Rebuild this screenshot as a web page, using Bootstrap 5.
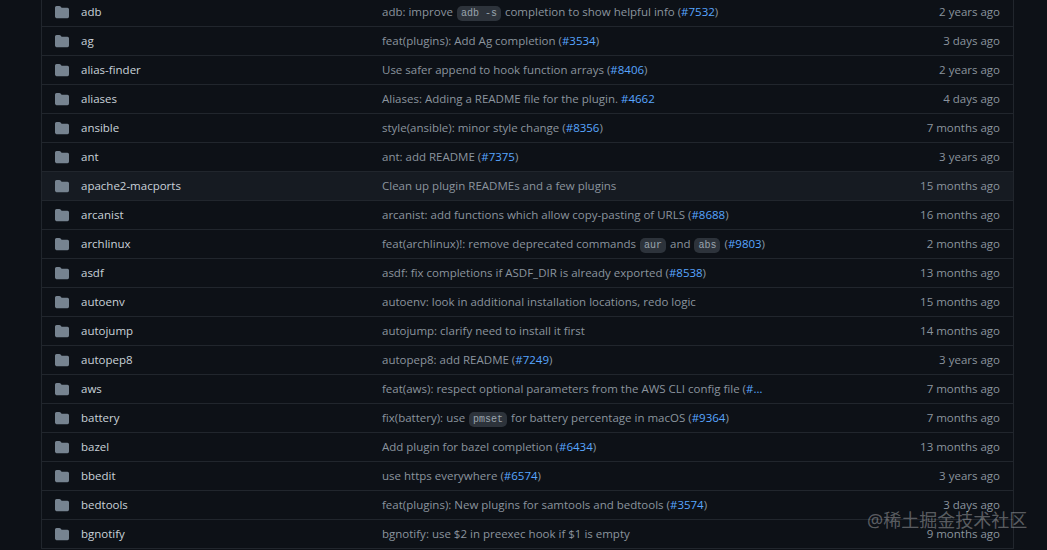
<!DOCTYPE html>
<html lang="en">
<head>
<meta charset="utf-8">
<title>plugins</title>
<link rel="stylesheet" href="https://cdn.jsdelivr.net/npm/bootstrap@5.3.0/dist/css/bootstrap.min.css">
<style>
html,body{height:550px;overflow:hidden;background:#0d1117;}
body{font-family:"Open Sans","Noto Sans",sans-serif;font-size:11.5px;color:#c9d1d9;}
.file-box{margin:-3px 33px 0 41px;border:1px solid #21262d;border-radius:0;}
.file-row{height:29px;border-top:1px solid #21262d;padding:0 13px;}
.file-row:first-child{border-top:0;height:28px;}
.file-row.hovered{background:#161b22;}
.ico{width:14px;height:14px;fill:#768390;margin-right:12px;flex:none;}
.fname{width:301px;flex:none;color:#c9d1d9;}
.msg{flex:1 1 0;min-width:0;color:#8b949e;white-space:nowrap;}
.msg a{color:#58a6ff;text-decoration:none;}
.tag{font-family:"Liberation Mono",monospace;font-size:10px;background:#2d333b;color:#9aa4ae;border-radius:5px;padding:2px 4px;margin:0 1px;}
.age{width:110px;flex:none;text-align:right;color:#8b949e;}
.mark-water{position:absolute;left:867px;top:509px;font-family:"Noto Sans","Noto Sans CJK SC",sans-serif;font-size:18px;line-height:22px;color:rgba(255,255,255,.32);white-space:nowrap;letter-spacing:0;}
</style>
</head>
<body>
<div class="file-box">
<div class="file-row d-flex align-items-center"><svg class="ico" viewBox="0 0 16 16"><path d="M1.75 1A1.75 1.75 0 0 0 0 2.75v10.5C0 14.216.784 15 1.75 15h12.5A1.75 1.75 0 0 0 16 13.25v-8.5A1.75 1.75 0 0 0 14.25 3H7.5a.25.25 0 0 1-.2-.1l-.9-1.2C6.07 1.26 5.55 1 5 1H1.75z"/></svg><span class="fname">adb</span><span class="msg">adb: improve <code class="tag">adb -s</code> completion to show helpful info (<a href="#">#7532</a>)</span><span class="age">2 years ago</span></div>
<div class="file-row d-flex align-items-center"><svg class="ico" viewBox="0 0 16 16"><path d="M1.75 1A1.75 1.75 0 0 0 0 2.75v10.5C0 14.216.784 15 1.75 15h12.5A1.75 1.75 0 0 0 16 13.25v-8.5A1.75 1.75 0 0 0 14.25 3H7.5a.25.25 0 0 1-.2-.1l-.9-1.2C6.07 1.26 5.55 1 5 1H1.75z"/></svg><span class="fname">ag</span><span class="msg">feat(plugins): Add Ag completion (<a href="#">#3534</a>)</span><span class="age">3 days ago</span></div>
<div class="file-row d-flex align-items-center"><svg class="ico" viewBox="0 0 16 16"><path d="M1.75 1A1.75 1.75 0 0 0 0 2.75v10.5C0 14.216.784 15 1.75 15h12.5A1.75 1.75 0 0 0 16 13.25v-8.5A1.75 1.75 0 0 0 14.25 3H7.5a.25.25 0 0 1-.2-.1l-.9-1.2C6.07 1.26 5.55 1 5 1H1.75z"/></svg><span class="fname">alias-finder</span><span class="msg">Use safer append to hook function arrays (<a href="#">#8406</a>)</span><span class="age">2 years ago</span></div>
<div class="file-row d-flex align-items-center"><svg class="ico" viewBox="0 0 16 16"><path d="M1.75 1A1.75 1.75 0 0 0 0 2.75v10.5C0 14.216.784 15 1.75 15h12.5A1.75 1.75 0 0 0 16 13.25v-8.5A1.75 1.75 0 0 0 14.25 3H7.5a.25.25 0 0 1-.2-.1l-.9-1.2C6.07 1.26 5.55 1 5 1H1.75z"/></svg><span class="fname">aliases</span><span class="msg">Aliases: Adding a README file for the plugin. <a href="#">#4662</a></span><span class="age">4 days ago</span></div>
<div class="file-row d-flex align-items-center"><svg class="ico" viewBox="0 0 16 16"><path d="M1.75 1A1.75 1.75 0 0 0 0 2.75v10.5C0 14.216.784 15 1.75 15h12.5A1.75 1.75 0 0 0 16 13.25v-8.5A1.75 1.75 0 0 0 14.25 3H7.5a.25.25 0 0 1-.2-.1l-.9-1.2C6.07 1.26 5.55 1 5 1H1.75z"/></svg><span class="fname">ansible</span><span class="msg">style(ansible): minor style change (<a href="#">#8356</a>)</span><span class="age">7 months ago</span></div>
<div class="file-row d-flex align-items-center"><svg class="ico" viewBox="0 0 16 16"><path d="M1.75 1A1.75 1.75 0 0 0 0 2.75v10.5C0 14.216.784 15 1.75 15h12.5A1.75 1.75 0 0 0 16 13.25v-8.5A1.75 1.75 0 0 0 14.25 3H7.5a.25.25 0 0 1-.2-.1l-.9-1.2C6.07 1.26 5.55 1 5 1H1.75z"/></svg><span class="fname">ant</span><span class="msg">ant: add README (<a href="#">#7375</a>)</span><span class="age">3 years ago</span></div>
<div class="file-row hovered d-flex align-items-center"><svg class="ico" viewBox="0 0 16 16"><path d="M1.75 1A1.75 1.75 0 0 0 0 2.75v10.5C0 14.216.784 15 1.75 15h12.5A1.75 1.75 0 0 0 16 13.25v-8.5A1.75 1.75 0 0 0 14.25 3H7.5a.25.25 0 0 1-.2-.1l-.9-1.2C6.07 1.26 5.55 1 5 1H1.75z"/></svg><span class="fname">apache2-macports</span><span class="msg">Clean up plugin READMEs and a few plugins</span><span class="age">15 months ago</span></div>
<div class="file-row d-flex align-items-center"><svg class="ico" viewBox="0 0 16 16"><path d="M1.75 1A1.75 1.75 0 0 0 0 2.75v10.5C0 14.216.784 15 1.75 15h12.5A1.75 1.75 0 0 0 16 13.25v-8.5A1.75 1.75 0 0 0 14.25 3H7.5a.25.25 0 0 1-.2-.1l-.9-1.2C6.07 1.26 5.55 1 5 1H1.75z"/></svg><span class="fname">arcanist</span><span class="msg">arcanist: add functions which allow copy-pasting of URLS (<a href="#">#8688</a>)</span><span class="age">16 months ago</span></div>
<div class="file-row d-flex align-items-center"><svg class="ico" viewBox="0 0 16 16"><path d="M1.75 1A1.75 1.75 0 0 0 0 2.75v10.5C0 14.216.784 15 1.75 15h12.5A1.75 1.75 0 0 0 16 13.25v-8.5A1.75 1.75 0 0 0 14.25 3H7.5a.25.25 0 0 1-.2-.1l-.9-1.2C6.07 1.26 5.55 1 5 1H1.75z"/></svg><span class="fname">archlinux</span><span class="msg">feat(archlinux)!: remove deprecated commands <code class="tag">aur</code> and <code class="tag">abs</code> (<a href="#">#9803</a>)</span><span class="age">2 months ago</span></div>
<div class="file-row d-flex align-items-center"><svg class="ico" viewBox="0 0 16 16"><path d="M1.75 1A1.75 1.75 0 0 0 0 2.75v10.5C0 14.216.784 15 1.75 15h12.5A1.75 1.75 0 0 0 16 13.25v-8.5A1.75 1.75 0 0 0 14.25 3H7.5a.25.25 0 0 1-.2-.1l-.9-1.2C6.07 1.26 5.55 1 5 1H1.75z"/></svg><span class="fname">asdf</span><span class="msg">asdf: fix completions if ASDF_DIR is already exported (<a href="#">#8538</a>)</span><span class="age">13 months ago</span></div>
<div class="file-row d-flex align-items-center"><svg class="ico" viewBox="0 0 16 16"><path d="M1.75 1A1.75 1.75 0 0 0 0 2.75v10.5C0 14.216.784 15 1.75 15h12.5A1.75 1.75 0 0 0 16 13.25v-8.5A1.75 1.75 0 0 0 14.25 3H7.5a.25.25 0 0 1-.2-.1l-.9-1.2C6.07 1.26 5.55 1 5 1H1.75z"/></svg><span class="fname">autoenv</span><span class="msg">autoenv: look in additional installation locations, redo logic</span><span class="age">15 months ago</span></div>
<div class="file-row d-flex align-items-center"><svg class="ico" viewBox="0 0 16 16"><path d="M1.75 1A1.75 1.75 0 0 0 0 2.75v10.5C0 14.216.784 15 1.75 15h12.5A1.75 1.75 0 0 0 16 13.25v-8.5A1.75 1.75 0 0 0 14.25 3H7.5a.25.25 0 0 1-.2-.1l-.9-1.2C6.07 1.26 5.55 1 5 1H1.75z"/></svg><span class="fname">autojump</span><span class="msg">autojump: clarify need to install it first</span><span class="age">14 months ago</span></div>
<div class="file-row d-flex align-items-center"><svg class="ico" viewBox="0 0 16 16"><path d="M1.75 1A1.75 1.75 0 0 0 0 2.75v10.5C0 14.216.784 15 1.75 15h12.5A1.75 1.75 0 0 0 16 13.25v-8.5A1.75 1.75 0 0 0 14.25 3H7.5a.25.25 0 0 1-.2-.1l-.9-1.2C6.07 1.26 5.55 1 5 1H1.75z"/></svg><span class="fname">autopep8</span><span class="msg">autopep8: add README (<a href="#">#7249</a>)</span><span class="age">3 years ago</span></div>
<div class="file-row d-flex align-items-center"><svg class="ico" viewBox="0 0 16 16"><path d="M1.75 1A1.75 1.75 0 0 0 0 2.75v10.5C0 14.216.784 15 1.75 15h12.5A1.75 1.75 0 0 0 16 13.25v-8.5A1.75 1.75 0 0 0 14.25 3H7.5a.25.25 0 0 1-.2-.1l-.9-1.2C6.07 1.26 5.55 1 5 1H1.75z"/></svg><span class="fname">aws</span><span class="msg">feat(aws): respect optional parameters from the AWS CLI config file (<a href="#">#…</a></span><span class="age">7 months ago</span></div>
<div class="file-row d-flex align-items-center"><svg class="ico" viewBox="0 0 16 16"><path d="M1.75 1A1.75 1.75 0 0 0 0 2.75v10.5C0 14.216.784 15 1.75 15h12.5A1.75 1.75 0 0 0 16 13.25v-8.5A1.75 1.75 0 0 0 14.25 3H7.5a.25.25 0 0 1-.2-.1l-.9-1.2C6.07 1.26 5.55 1 5 1H1.75z"/></svg><span class="fname">battery</span><span class="msg">fix(battery): use <code class="tag">pmset</code> for battery percentage in macOS (<a href="#">#9364</a>)</span><span class="age">7 months ago</span></div>
<div class="file-row d-flex align-items-center"><svg class="ico" viewBox="0 0 16 16"><path d="M1.75 1A1.75 1.75 0 0 0 0 2.75v10.5C0 14.216.784 15 1.75 15h12.5A1.75 1.75 0 0 0 16 13.25v-8.5A1.75 1.75 0 0 0 14.25 3H7.5a.25.25 0 0 1-.2-.1l-.9-1.2C6.07 1.26 5.55 1 5 1H1.75z"/></svg><span class="fname">bazel</span><span class="msg">Add plugin for bazel completion (<a href="#">#6434</a>)</span><span class="age">13 months ago</span></div>
<div class="file-row d-flex align-items-center"><svg class="ico" viewBox="0 0 16 16"><path d="M1.75 1A1.75 1.75 0 0 0 0 2.75v10.5C0 14.216.784 15 1.75 15h12.5A1.75 1.75 0 0 0 16 13.25v-8.5A1.75 1.75 0 0 0 14.25 3H7.5a.25.25 0 0 1-.2-.1l-.9-1.2C6.07 1.26 5.55 1 5 1H1.75z"/></svg><span class="fname">bbedit</span><span class="msg">use https everywhere (<a href="#">#6574</a>)</span><span class="age">3 years ago</span></div>
<div class="file-row d-flex align-items-center"><svg class="ico" viewBox="0 0 16 16"><path d="M1.75 1A1.75 1.75 0 0 0 0 2.75v10.5C0 14.216.784 15 1.75 15h12.5A1.75 1.75 0 0 0 16 13.25v-8.5A1.75 1.75 0 0 0 14.25 3H7.5a.25.25 0 0 1-.2-.1l-.9-1.2C6.07 1.26 5.55 1 5 1H1.75z"/></svg><span class="fname">bedtools</span><span class="msg">feat(plugins): New plugins for samtools and bedtools (<a href="#">#3574</a>)</span><span class="age">3 days ago</span></div>
<div class="file-row d-flex align-items-center"><svg class="ico" viewBox="0 0 16 16"><path d="M1.75 1A1.75 1.75 0 0 0 0 2.75v10.5C0 14.216.784 15 1.75 15h12.5A1.75 1.75 0 0 0 16 13.25v-8.5A1.75 1.75 0 0 0 14.25 3H7.5a.25.25 0 0 1-.2-.1l-.9-1.2C6.07 1.26 5.55 1 5 1H1.75z"/></svg><span class="fname">bgnotify</span><span class="msg">bgnotify: use $2 in preexec hook if $1 is empty</span><span class="age">9 months ago</span></div>
</div>
<div class="mark-water">@稀土掘金技术社区</div>
<script src="https://cdn.jsdelivr.net/npm/bootstrap@5.3.0/dist/js/bootstrap.bundle.min.js"></script>
</body>
</html>
